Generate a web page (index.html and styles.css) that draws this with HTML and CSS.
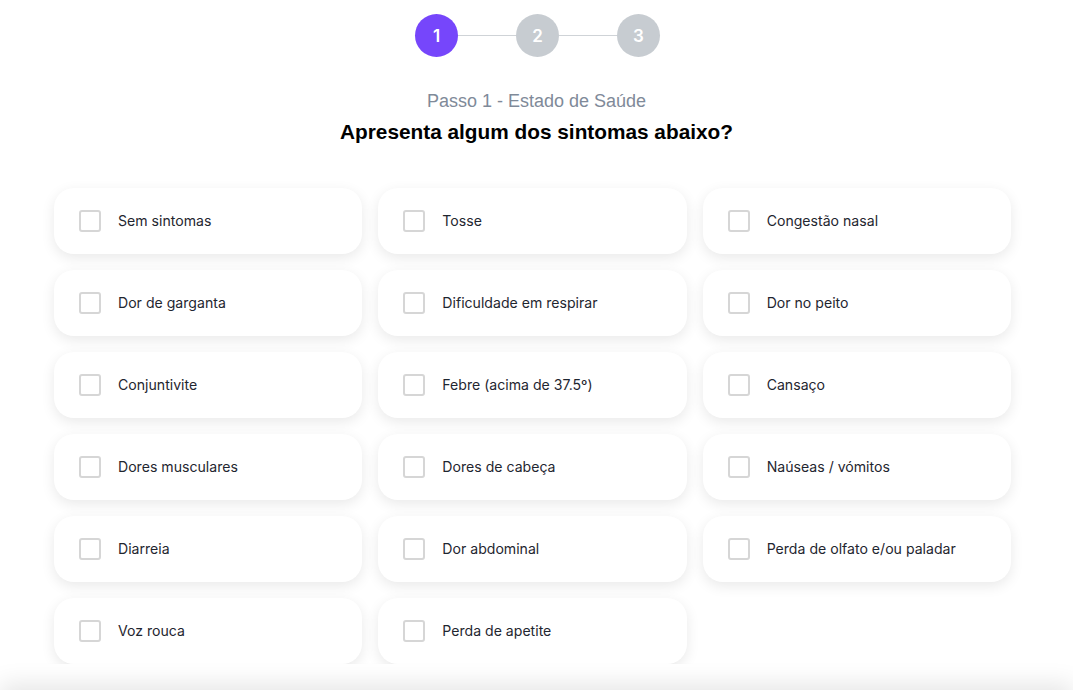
FILE: index.html
```html
<!DOCTYPE html>
<html lang="pt">
<head>
<meta charset="utf-8">
<link rel="stylesheet" href="styles.css">
</head>
<body>
<div class="page">
  <div class="stepper">
    <div class="step active">1</div>
    <div class="line"></div>
    <div class="step">2</div>
    <div class="line"></div>
    <div class="step">3</div>
  </div>
  <div class="subtitle">Passo 1 - Estado de Saúde</div>
  <h1 class="title">Apresenta algum dos sintomas abaixo?</h1>
  <div class="grid">
    <label class="card"><span class="box"></span><span class="label">Sem sintomas</span></label>
    <label class="card"><span class="box"></span><span class="label">Tosse</span></label>
    <label class="card"><span class="box"></span><span class="label">Congestão nasal</span></label>
    <label class="card"><span class="box"></span><span class="label">Dor de garganta</span></label>
    <label class="card"><span class="box"></span><span class="label">Dificuldade em respirar</span></label>
    <label class="card"><span class="box"></span><span class="label">Dor no peito</span></label>
    <label class="card"><span class="box"></span><span class="label">Conjuntivite</span></label>
    <label class="card"><span class="box"></span><span class="label">Febre (acima de 37.5º)</span></label>
    <label class="card"><span class="box"></span><span class="label">Cansaço</span></label>
    <label class="card"><span class="box"></span><span class="label">Dores musculares</span></label>
    <label class="card"><span class="box"></span><span class="label">Dores de cabeça</span></label>
    <label class="card"><span class="box"></span><span class="label">Naúseas / vómitos</span></label>
    <label class="card"><span class="box"></span><span class="label">Diarreia</span></label>
    <label class="card"><span class="box"></span><span class="label">Dor abdominal</span></label>
    <label class="card"><span class="box"></span><span class="label">Perda de olfato e/ou paladar</span></label>
    <label class="card"><span class="box"></span><span class="label">Voz rouca</span></label>
    <label class="card"><span class="box"></span><span class="label">Perda de apetite</span></label>
  </div>
</div>
<div class="footer"></div>
</body>
</html>
```
FILE: styles.css
```css
html, body {
  margin: 0;
  padding: 0;
  background: #ffffff;
  font-family: Inter, "Liberation Sans", Arial, sans-serif;
  overflow: hidden;
}
.page {
  padding-top: 14px;
}
.stepper {
  display: flex;
  align-items: center;
  justify-content: center;
  padding-left: 2px;
}
.step {
  width: 43px;
  height: 43px;
  border-radius: 50%;
  background: #c7ccd1;
  color: #ffffff;
  font-size: 17px;
  font-weight: 600;
  display: flex;
  align-items: center;
  justify-content: center;
}
.step.active {
  background: #7646fb;
}
.line {
  width: 58px;
  height: 1px;
  background: #cfd3d7;
}
.subtitle {
  margin-top: 33px;
  text-align: center;
  color: #7f8a99;
  font-family: "Liberation Sans", Arial, sans-serif;
  font-size: 18px;
  line-height: 22px;
}
.title {
  margin: 8px 0 0;
  text-align: center;
  font-family: "Liberation Sans", Arial, sans-serif;
  font-size: 20.8px;
  font-weight: 700;
  line-height: 24px;
  color: #000;
}
.grid {
  margin: 44px 0 0 54px;
  width: 957px;
  display: grid;
  grid-template-columns: repeat(3, 1fr);
  column-gap: 16px;
  row-gap: 16px;
}
.card {
  height: 66px;
  background: #fff;
  border-radius: 20px;
  box-shadow: 0 4px 14px rgba(0, 0, 0, 0.09);
  display: flex;
  align-items: center;
  padding-left: 25px;
  box-sizing: border-box;
}
.box {
  width: 22px;
  height: 22px;
  box-sizing: border-box;
  border: 2px solid #d6d6d6;
  border-radius: 3px;
  flex: none;
}
.label {
  margin-left: 17px;
  font-size: 14.1px;
  line-height: 18px;
  margin-top: -1px;
  color: #1f2630;
}
.footer {
  position: fixed;
  left: 0;
  right: 0;
  top: 690px;
  height: 60px;
  background: #fff;
  box-shadow: 0 -6px 24px rgba(0, 0, 0, 0.10);
}
```
